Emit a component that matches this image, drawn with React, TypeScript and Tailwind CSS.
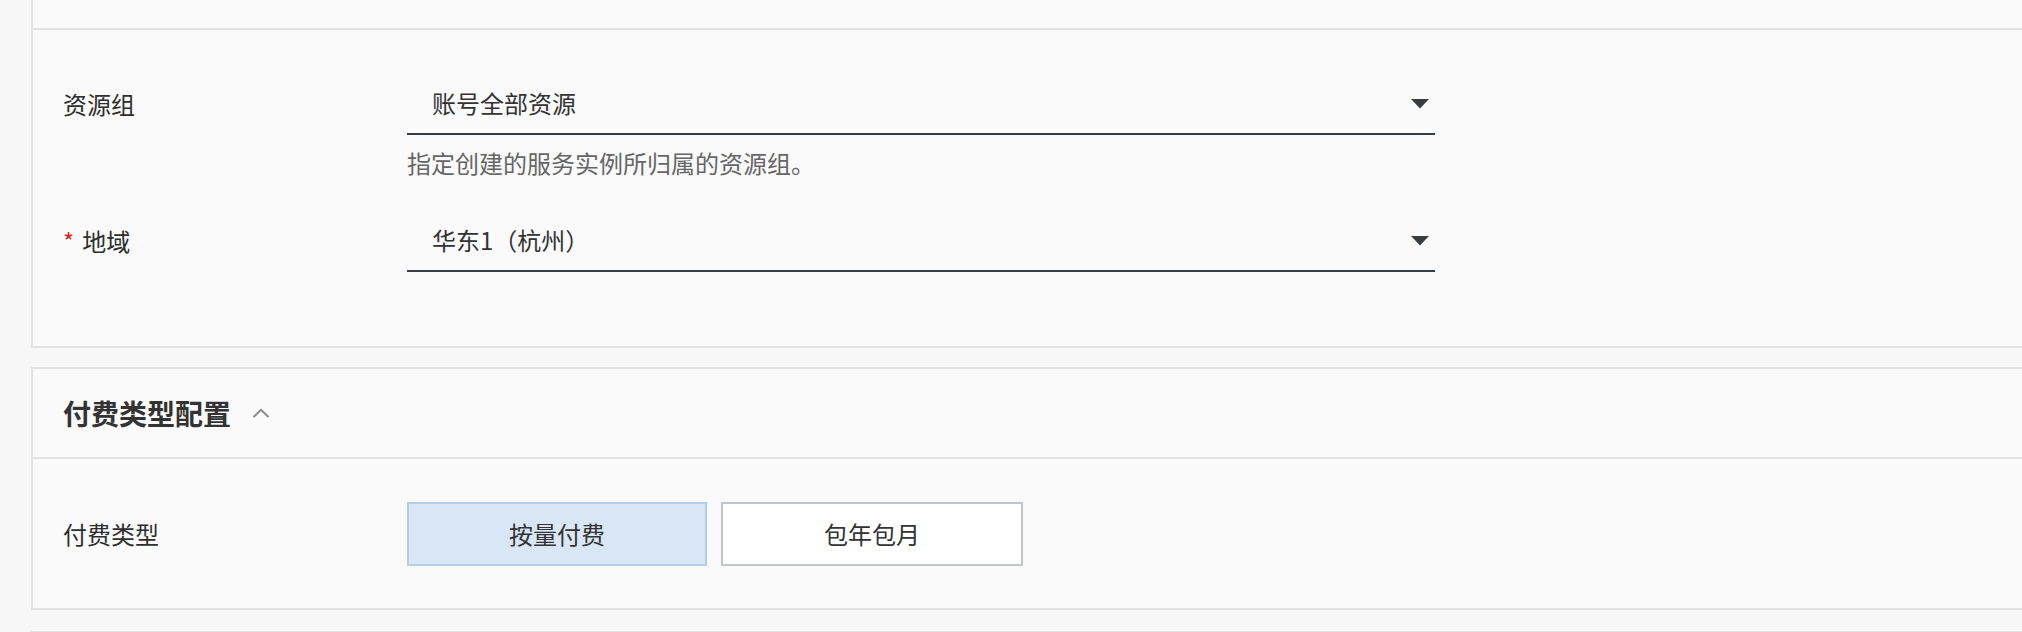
import React from "react";

const FONT = '"Noto Sans CJK SC", "Noto Sans", "Liberation Sans", sans-serif';

function Caret() {
  return (
    <svg width="20" height="11" viewBox="0 0 20 11" className="shrink-0">
      <polygon points="1,1 19,1 10,10.5" fill="#373d41" />
    </svg>
  );
}

function Select({ value }: { value: string }) {
  return (
    <div className="flex h-[62px] w-[1028px] items-center justify-between border-b-2 border-[#373d41] pl-[25px] pr-[5px]">
      <span className="text-[24px] leading-none text-[#333333]">{value}</span>
      <Caret />
    </div>
  );
}

export default function App() {
  return (
    <div
      className="min-h-screen w-full overflow-hidden bg-[#f7f7f7]"
      style={{ fontFamily: FONT }}
    >
      <div className="pl-[31px]">
        {/* Card 1 (header cut off above) */}
        <div className="border-b-2 border-l-2 border-[#e2e2e2] bg-[#fafafa]">
          <div className="h-[30px] border-b-2 border-[#e2e2e2]" />
          <div className="pl-[30px] pt-[43px] pb-[74px]">
            <div className="flex">
              <div className="flex h-[62px] w-[344px] items-center text-[24px] text-[#2e2e2e]">
                资源组
              </div>
              <div className="flex flex-col">
                <Select value="账号全部资源" />
                <div className="mt-[10px] text-[24px] leading-[36px] text-[#666666]">
                  指定创建的服务实例所归属的资源组。
                </div>
              </div>
            </div>
            <div className="mt-[29px] flex">
              <div className="flex h-[62px] w-[344px] items-center text-[24px] text-[#2e2e2e]">
                <span className="mr-[8px] text-[#d9261c]">*</span>
                地域
              </div>
              <Select value="华东1（杭州）" />
            </div>
          </div>
        </div>

        {/* Card 2 */}
        <div className="mt-[19px] border-y-2 border-l-2 border-[#e2e2e2] bg-[#fafafa]">
          <div className="flex h-[90px] items-center border-b-2 border-[#e2e2e2] pl-[30px]">
            <span className="text-[28px] font-bold text-[#333333]">付费类型配置</span>
            <svg width="18" height="10" viewBox="0 0 18 10" className="ml-[21px]">
              <polyline
                points="1.5,9 9,1.8 16.5,9"
                fill="none"
                stroke="#8a8a8a"
                strokeWidth="2"
              />
            </svg>
          </div>
          <div className="flex pl-[30px] pt-[43px] pb-[42px]">
            <div className="flex h-[64px] w-[344px] items-center text-[24px] text-[#2e2e2e]">
              付费类型
            </div>
            <div className="flex gap-[14px]">
              <button className="flex h-[64px] w-[300px] items-center justify-center border-2 border-[#b4cde9] bg-[#d9e6f5] text-[24px] text-[#333333]">
                按量付费
              </button>
              <button className="flex h-[64px] w-[302px] items-center justify-center border-2 border-[#c3c6cb] bg-white text-[24px] text-[#333333]">
                包年包月
              </button>
            </div>
          </div>
        </div>

        {/* Card 3 (cut off below) */}
        <div className="mt-[21px] h-[40px] border-l-2 border-t-2 border-[#e2e2e2] bg-[#fafafa]" />
      </div>
    </div>
  );
}
